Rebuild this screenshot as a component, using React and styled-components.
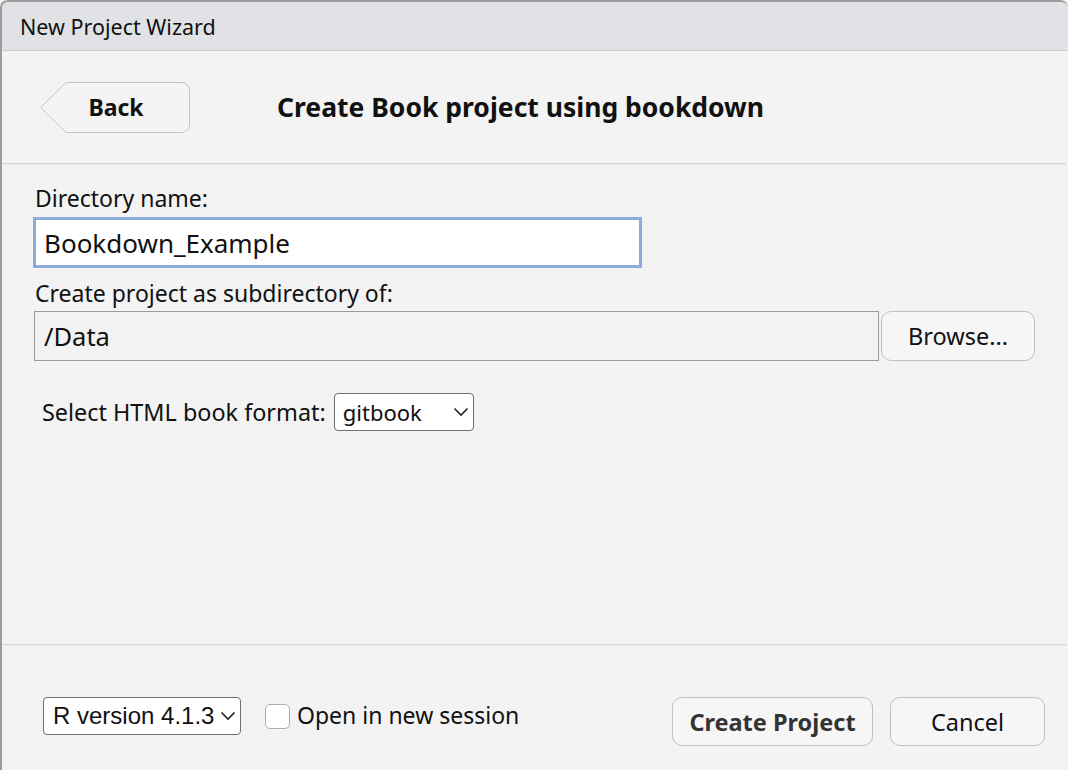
import React from 'react'
import styled, { createGlobalStyle } from 'styled-components';

const GlobalStyle = createGlobalStyle`
  html, body {
    margin: 0;
    padding: 0;
    background: #f2f3f2;
  }
  * {
    box-sizing: border-box;
  }
`;

const Window = styled.div`
  width: 1068px;
  height: 770px;
  display: flex;
  flex-direction: column;
  background: #f2f3f2;
  border-top: 2px solid #9c9c9c;
  border-left: 2px solid #9c9c9c;
  border-top-left-radius: 8px;
  border-top-right-radius: 8px;
  font-family: "Noto Sans", "Open Sans", sans-serif;
  color: #111;
  overflow: hidden;
`;

const TitleBar = styled.div`
  height: 49px;
  flex-shrink: 0;
  display: flex;
  align-items: center;
  padding-left: 18px;
  background: #e1e2e5;
  border-bottom: 1px solid #cdced1;
  font-size: 21.5px;
`;

const Header = styled.div`
  height: 112px;
  flex-shrink: 0;
  display: flex;
  align-items: center;
  padding-left: 38px;
`;

const Separator = styled.div`
  width: calc(100% - 2px);
  height: 2px;
  flex-shrink: 0;
  border-top: 1px solid #d6d7d8;
  border-bottom: 1px solid #e8e9e9;
`;

const BackButton = styled.button`
  position: relative;
  width: 150px;
  height: 51px;
  padding: 0;
  border: none;
  background: none;
  font-family: inherit;
  font-size: 23px;
  font-weight: 700;
  color: #111;
  display: flex;
  align-items: center;
  justify-content: center;
`;

const BackShape = styled.svg`
  position: absolute;
  inset: 0;
  width: 100%;
  height: 100%;
  z-index: 0;
`;

const BackLabel = styled.span`
  position: relative;
  z-index: 1;
  padding-left: 2px;
`;

const Heading = styled.h1`
  margin: 0 0 0 87px;
  font-size: 26.5px;
  font-weight: 700;
`;

const Content = styled.div`
  flex: 1;
  padding-left: 31px;
  display: flex;
  flex-direction: column;
  align-items: flex-start;
`;

const Label = styled.div`
  margin: ${p => p.$top}px 0 0 2px;
  font-size: 23px;
  line-height: 24px;
`;

const NameInput = styled.div`
  margin-top: 7px;
  width: 609px;
  height: 51px;
  border: 3px solid #8eaadb;
  background: #fff;
  padding-left: 8px;
  display: flex;
  align-items: center;
  font-size: 26px;
`;

const PathRow = styled.div`
  margin-top: 6px;
  display: flex;
  align-items: center;
  gap: 2px;
`;

const PathField = styled.div`
  margin-left: 1px;
  width: 845px;
  height: 50px;
  border: 1px solid #9a9a9a;
  background: #f1f2f1;
  padding-left: 9px;
  display: flex;
  align-items: center;
  font-size: 25.5px;
`;

const Button = styled.button`
  width: ${p => p.$w}px;
  height: ${p => p.$h || 50}px;
  border: 1.5px solid #c0c0c0;
  border-radius: 10px;
  background: #f6f6f7;
  font-family: inherit;
  font-size: 23.5px;
  font-weight: ${p => (p.$bold ? 700 : 400)};
  color: ${p => (p.$bold ? '#333' : '#111')};
  padding: 0;
`;

const FormatRow = styled.div`
  margin: 32px 0 0 9px;
  display: flex;
  align-items: center;
  gap: 8px;
  font-size: 23.4px;
`;

const Select = styled.div`
  width: ${p => p.$w}px;
  height: 38px;
  border: 1.5px solid #6f6f6f;
  border-radius: 4px;
  background: #fff;
  display: flex;
  align-items: center;
  justify-content: space-between;
  padding: 0 4px 0 ${p => p.$pad}px;
  font-family: ${p => (p.$arial ? '"Liberation Sans", Arial, sans-serif' : 'inherit')};
  font-size: ${p => p.$size}px;
  color: #111;
`;

const Footer = styled.div`
  height: 124px;
  flex-shrink: 0;
  display: flex;
  align-items: flex-start;
  padding: 51px 23px 0 41px;
`;

const CheckWrap = styled.label`
  margin: 2px 0 0 24px;
  display: flex;
  align-items: center;
  gap: 7px;
  font-size: 23px;
`;

const CheckBox = styled.span`
  width: 25px;
  height: 25px;
  margin-top: 2px;
  border: 1.5px solid #adadad;
  border-radius: 5px;
  background: #fff;
`;

const Buttons = styled.div`
  margin-left: auto;
  display: flex;
  gap: 17px;
`;

const Chevron = () => (
  <svg width="16" height="10" viewBox="0 0 16 10">
    <path d="M1.5 1.5 L8 8 L14.5 1.5" fill="none" stroke="#222" strokeWidth="1.6" />
  </svg>
);

const App = () => {
  return (
    <>
      <GlobalStyle />
      <Window>
        <TitleBar>New Project Wizard</TitleBar>
        <Header>
          <BackButton>
            <BackShape viewBox="0 0 150 51">
              <path
                d="M26 0.5 H141.5 A8 8 0 0 1 149.5 8.5 V42.5 A8 8 0 0 1 141.5 50.5 H26 L0.7 25.5 Z"
                fill="#f4f4f6"
                stroke="#c2c2c2"
                strokeWidth="1"
              />
            </BackShape>
            <BackLabel>Back</BackLabel>
          </BackButton>
          <Heading>Create Book project using bookdown</Heading>
        </Header>
        <Separator />
        <Content>
          <Label $top={21}>Directory name:</Label>
          <NameInput>Bookdown_Example</NameInput>
          <Label $top={13}>Create project as subdirectory of:</Label>
          <PathRow>
            <PathField>/Data</PathField>
            <Button $w={154}>Browse...</Button>
          </PathRow>
          <FormatRow>
            <span>Select HTML book format:</span>
            <Select $w={140} $pad={8} $size={22}>
              gitbook
              <Chevron />
            </Select>
          </FormatRow>
        </Content>
        <Separator />
        <Footer>
          <Select $w={198} $pad={9} $size={24} $arial>
            R version 4.1.3
            <Chevron />
          </Select>
          <CheckWrap>
            <CheckBox />
            Open in new session
          </CheckWrap>
          <Buttons>
            <Button $w={201} $h={49} $bold>Create Project</Button>
            <Button $w={155} $h={49}>Cancel</Button>
          </Buttons>
        </Footer>
      </Window>
    </>
  )
}

export default App;
